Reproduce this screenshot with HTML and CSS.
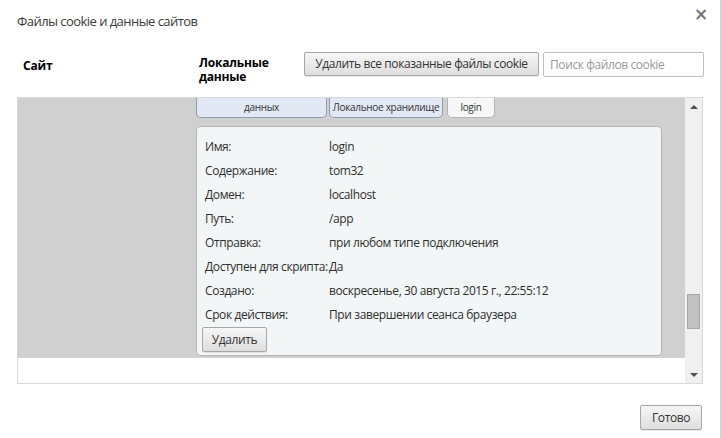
FILE: index.html
```html
<!DOCTYPE html>
<html lang="ru">
<head>
<meta charset="utf-8">
<link rel="stylesheet" href="styles.css">
</head>
<body>
<div class="dialog">
  <div class="titlebar">
    <div class="title">Файлы cookie и данные сайтов</div>
    <div class="close">×</div>
  </div>
  <div class="head">
    <div class="col-site">Сайт</div>
    <div class="col-data"><div>Локальные</div><div>данные</div></div>
    <button class="btn btn-wide">Удалить все показанные файлы cookie</button>
    <input class="search" type="text" placeholder="Поиск файлов cookie">
  </div>
  <div class="list">
    <div class="list-body">
      <div class="row-selected">
        <div class="site-cell"></div>
        <div class="data-cell">
          <div class="tabs">
            <div class="tab tab-blue tab-a">данных</div>
            <div class="tab tab-blue tab-b">Локальное хранилище</div>
            <div class="tab tab-white tab-c">login</div>
          </div>
          <div class="panel">
            <div class="prow"><span class="lbl">Имя:</span><span class="val">login</span></div>
            <div class="prow"><span class="lbl">Содержание:</span><span class="val">tom32</span></div>
            <div class="prow"><span class="lbl">Домен:</span><span class="val">localhost</span></div>
            <div class="prow"><span class="lbl">Путь:</span><span class="val">/app</span></div>
            <div class="prow"><span class="lbl">Отправка:</span><span class="val">при любом типе подключения</span></div>
            <div class="prow"><span class="lbl">Доступен для скрипта:</span><span class="val">Да</span></div>
            <div class="prow"><span class="lbl">Создано:</span><span class="val">воскресенье, 30 августа 2015 г., 22:55:12</span></div>
            <div class="prow"><span class="lbl">Срок действия:</span><span class="val">При завершении сеанса браузера</span></div>
            <button class="btn btn-del">Удалить</button>
          </div>
        </div>
      </div>
    </div>
    <div class="scrollbar">
      <div class="arrow arrow-up"></div>
      <div class="track"><div class="thumb"></div></div>
      <div class="arrow arrow-down"></div>
    </div>
  </div>
  <div class="footer">
    <button class="btn btn-done">Готово</button>
  </div>
</div>
</body>
</html>
```

FILE: styles.css
```css
html, body {
  margin: 0;
  padding: 0;
  background: #ffffff;
}
body {
  font-family: "Open Sans", "Noto Sans", sans-serif;
  color: #333333;
}
.dialog {
  width: 720px;
  height: 438px;
  border-right: 1px solid #d4d4d4;
  box-sizing: content-box;
  display: flex;
  flex-direction: column;
}
.titlebar {
  display: flex;
  justify-content: space-between;
  padding: 10px 0 0 17px;
  height: 40px;
  box-sizing: border-box;
}
.title {
  font-size: 13px;
  letter-spacing: -0.55px;
  color: #3a3a3a;
  line-height: 22px;
}
.close {
  font-family: "DejaVu Sans", sans-serif;
  font-size: 17px;
  font-weight: bold;
  color: #777777;
  line-height: 14px;
  margin-top: -3px;
  width: 26px;
}
.head {
  display: flex;
  align-items: flex-start;
  padding: 12px 0 0 0;
  height: 57px;
  box-sizing: border-box;
}
.col-site {
  width: 176px;
  padding-left: 23px;
  font-size: 12px;
  font-weight: bold;
  letter-spacing: -0.2px;
  color: #000;
  line-height: 14px;
  margin-top: 7px;
}
.col-data {
  width: 105px;
  font-size: 12px;
  font-weight: bold;
  letter-spacing: -0.2px;
  color: #000;
  line-height: 14px;
  margin-top: 4px;
}
.btn {
  font-family: "Open Sans", "Noto Sans", sans-serif;
  font-size: 12px;
  letter-spacing: -0.4px;
  color: #333;
  border: 1px solid #a6a6a6;
  border-radius: 2px;
  background: linear-gradient(#f6f6f6, #dedede);
  box-shadow: 0 1px 0 rgba(0,0,0,0.08);
  padding: 0;
  height: 24px;
  line-height: 20px;
  white-space: nowrap;
}
.btn-wide {
  width: 235px;
  margin-right: 4px;
}
.search {
  width: 161px;
  height: 25px;
  box-sizing: border-box;
  border: 1px solid #bfbfbf;
  border-radius: 2px;
  padding: 0 6px;
  font-family: "Open Sans", "Noto Sans", sans-serif;
  font-size: 12px;
  letter-spacing: -0.4px;
  outline: none;
}
.search::placeholder {
  color: #999999;
}
.list {
  margin-left: 17px;
  width: 686px;
  height: 287px;
  box-sizing: border-box;
  border: 1px solid #d9d9d9;
  display: flex;
}
.list-body {
  flex: 1;
  background: #ffffff;
}
.row-selected {
  background: #d0d0d0;
  height: 260px;
  display: flex;
}
.site-cell {
  width: 178px;
}
.data-cell {
  width: 466px;
  display: flex;
  flex-direction: column;
}
.tabs {
  display: flex;
  height: 20px;
  margin-bottom: 8px;
}
.tab {
  height: 20px;
  box-sizing: border-box;
  border: 1px solid #8e9bb2;
  border-top: none;
  border-radius: 0 0 5px 5px;
  font-size: 10px;
  letter-spacing: -0.3px;
  color: #333;
  text-align: center;
  line-height: 18px;
  white-space: nowrap;
  overflow: hidden;
}
.tab-blue {
  background: #e2e8f4;
}
.tab-white {
  background: #f7f7f7;
  border-color: #b4b4b4;
}
.tab-a { width: 131px; margin-right: 2px; }
.tab-b { width: 114px; margin-right: 4px; }
.tab-c { width: 48px; }
.panel {
  height: 230px;
  box-sizing: border-box;
  background: #f3f6f7;
  border: 1px solid #b4b4b4;
  border-radius: 4px;
  padding: 7px 0 0 5px;
}
.prow {
  display: flex;
  height: 24px;
  align-items: center;
  padding-left: 3px;
  font-size: 12px;
  letter-spacing: -0.4px;
  color: #2e2e2e;
  white-space: nowrap;
}
.lbl {
  width: 124px;
  flex: none;
}
.val {
  flex: none;
}
.btn-del {
  width: 65px;
  height: 25px;
  margin-top: 1px;
}
.scrollbar {
  width: 17px;
  background: #f0f0f0;
  display: flex;
  flex-direction: column;
}
.arrow {
  height: 17px;
  display: flex;
  align-items: center;
  justify-content: center;
}
.arrow-up::before {
  content: "";
  border-left: 4px solid transparent;
  border-right: 4px solid transparent;
  border-bottom: 4px solid #505050;
}
.arrow-down::before {
  content: "";
  border-left: 4px solid transparent;
  border-right: 4px solid transparent;
  border-top: 4px solid #505050;
}
.track {
  flex: 1;
  position: relative;
}
.thumb {
  position: absolute;
  left: 2px;
  top: 179px;
  width: 13px;
  height: 35px;
  box-sizing: border-box;
  border: 1px solid #a8a8a8;
  background: #c2c2c2;
}
.footer {
  display: flex;
  justify-content: flex-end;
  padding: 21px 18px 0 0;
}
.btn-done {
  width: 62px;
  height: 25px;
}
```
